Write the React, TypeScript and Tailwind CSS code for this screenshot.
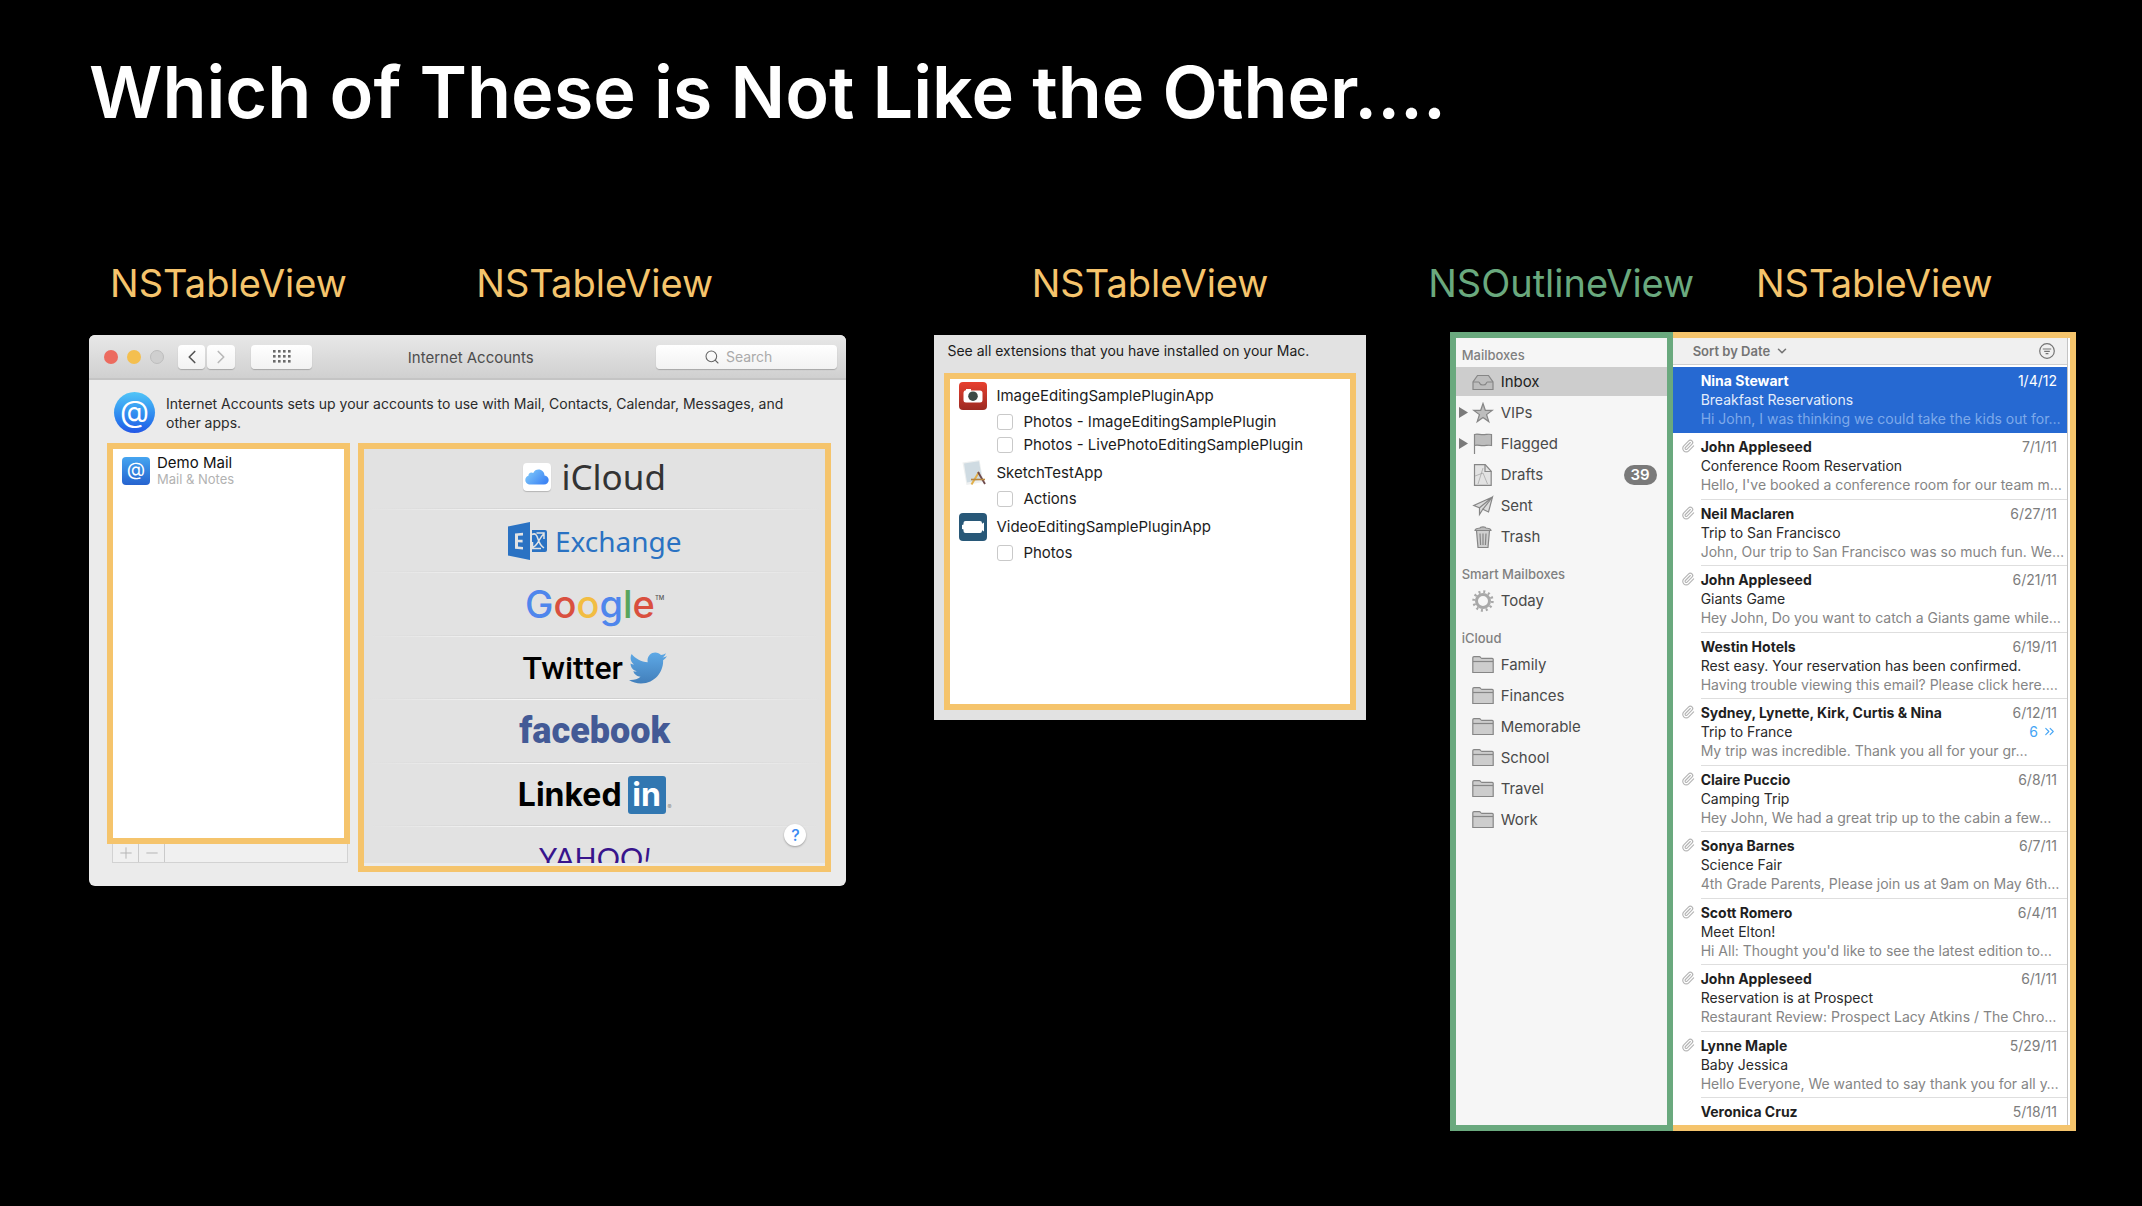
import type { ReactNode } from 'react';
import { ChevronDown, ChevronLeft, ChevronRight, ChevronsRight, Minus, Paperclip, Plus, Search } from 'lucide-react';
import { FaTwitter } from 'react-icons/fa';

/* ---------- shared pieces ---------- */

function Label({ children, green = false }: { children: ReactNode; green?: boolean }) {
  return (
    <h2
      className={`flex h-12 items-center justify-center whitespace-nowrap text-[38px] leading-[48px] ${
        green ? 'text-[#6aa97e]' : 'text-[#f5c46c]'
      }`}
    >
      <span className="shrink-0">{children}</span>
    </h2>
  );
}

/* ---------- Internet Accounts ---------- */

const toolButton =
  'flex h-6 items-center justify-center rounded-[4px] bg-gradient-to-b from-white to-[#f2f2f2] shadow-[0_1px_1px_rgba(0,0,0,0.22)]';

function GridDots() {
  return (
    <svg viewBox="0 0 18 13" className="h-[13px] w-[18px] fill-[#6a6a6a]" aria-hidden="true">
      {[0, 5, 10, 15].map((x) => [0, 5, 10].map((y) => <rect key={`${x}-${y}`} x={x} y={y} width="2.6" height="2.6" />))}
    </svg>
  );
}

function TitleBar() {
  return (
    <header className="grid h-[45px] grid-cols-[1fr_auto_1fr] items-center border-b-2 border-[#c4c4c4] bg-gradient-to-b from-[#e8e8e8] to-[#d0d0d0] pl-[15px] pr-[9px]">
      <div className="flex items-center">
        <div className="flex gap-[9px]">
          <button aria-label="Close" className="size-3.5 rounded-full bg-[#ec6b5f]" />
          <button aria-label="Minimize" className="size-3.5 rounded-full bg-[#f4bf4f]" />
          <button aria-label="Zoom" disabled className="size-3.5 rounded-full border border-[#bdbdbd] bg-[#cfcfcf]" />
        </div>
        <div className="ml-[14px] flex gap-0.5">
          <button aria-label="Back" className={`${toolButton} w-[27px] text-[#555]`}>
            <ChevronLeft size={22} strokeWidth={1.8} />
          </button>
          <button aria-label="Forward" className={`${toolButton} w-[28px] text-[#b9b9b9]`}>
            <ChevronRight size={22} strokeWidth={1.8} />
          </button>
        </div>
        <button aria-label="Show all" className={`${toolButton} ml-4 w-[61px]`}>
          <GridDots />
        </button>
      </div>
      <h3 className="pt-0.5 text-[15px] leading-5 text-[#4d4d4d]">Internet Accounts</h3>
      <label className={`${toolButton} w-[181px] gap-1.5 justify-self-end`}>
        <Search size={16} strokeWidth={1.6} className="text-[#666]" />
        <input
          type="search"
          aria-label="Search"
          placeholder="Search"
          className="w-16 appearance-none bg-transparent text-[14px] leading-5 outline-none placeholder:text-[#aaa]"
        />
      </label>
    </header>
  );
}

function CloudIcon() {
  return (
    <span className="flex size-7 items-center justify-center rounded-[4px] bg-white shadow-[0_1px_1px_rgba(0,0,0,0.2)]">
      <svg viewBox="0 0 24 16" className="h-4 w-6" aria-hidden="true">
        <defs>
          <linearGradient id="cloud" x1="0" y1="0" x2="1" y2="0.6">
            <stop offset="0" stopColor="#86d0fb" />
            <stop offset="1" stopColor="#3f86f4" />
          </linearGradient>
        </defs>
        <path
          d="M5.5 15.5C2.4 15.5.3 13.600.3 11c0-2.200 1.300-3.700 3.100-4.200C3.300 4.800 4.700 3.400 6.400 3.400c.7 0 1.300.2 1.800.5C9.300 1.700 11.200.5 13.500.5c3.300 0 5.900 2.500 6 5.900 2.500.4 4.200 2.200 4.200 4.600 0 2.600-2 4.500-4.700 4.500z"
          fill="url(#cloud)"
        />
      </svg>
    </span>
  );
}

function ExchangeIcon() {
  return (
    <svg viewBox="0 0 39 38" className="h-[38px] w-[39px]" aria-hidden="true">
      <path d="M0 4.500 22 0v38L0 33.500z" fill="#2a72c3" />
      <path d="M7 11.500 15 10.800v2.700l-5 .3v4l4.600-.1v2.700L10 20.300v4.200l5 .4v2.700l-8-.8z" fill="#e3e3e3" />
      <path d="M24 8h13a2 2 0 0 1 2 2v18a2 2 0 0 1-2 2H24z" fill="#2a72c3" />
      <path
        d="M24 12.500c3.500-2 5 1 6 4.500s2.500 6.500 6 9M24 25.500c4-1 5-3.500 7-7s3-5 5-7M28.500 11H36v6M24.500 20v6.500H33"
        fill="none"
        stroke="#e3e3e3"
        strokeWidth="1.500"
      />
    </svg>
  );
}

function Bird() {
  return (
    <>
      <FaTwitter size={38} className="fill-[url(#bird)]" />
      <svg className="absolute size-0" aria-hidden="true">
        <linearGradient id="bird" x1="0" y1="0" x2="0" y2="1">
          <stop offset="0" stopColor="#5ea9e6" />
          <stop offset="1" stopColor="#427fbb" />
        </linearGradient>
      </svg>
    </>
  );
}

const providers: { name: string; logo: ReactNode }[] = [
  {
    name: 'iCloud',
    logo: (
      <span className="flex items-center gap-2.5 pb-1">
        <CloudIcon />
        <span className="font-['Noto_Sans',sans-serif] text-[35px] leading-10 text-[#333]">iCloud</span>
      </span>
    ),
  },
  {
    name: 'Exchange',
    logo: (
      <span className="flex items-center gap-2">
        <ExchangeIcon />
        <span className="font-['Noto_Sans',sans-serif] text-[28px] leading-10 text-[#2a72c3]">Exchange</span>
      </span>
    ),
  },
  {
    name: 'Google',
    logo: (
      <span className="flex items-center text-[38px] font-medium leading-10">
        <span className="text-[#4f86ec]">G</span>
        <span className="text-[#d9503f]">o</span>
        <span className="text-[#f2bd42]">o</span>
        <span className="text-[#4f86ec]">g</span>
        <span className="text-[#58a55c]">l</span>
        <span className="text-[#d9503f]">e</span>
        <span className="self-start pt-2.5 text-[6px] leading-2 text-[#555]">TM</span>
      </span>
    ),
  },
  {
    name: 'Twitter',
    logo: (
      <span className="flex items-center gap-1.5">
        <span className="font-['Roboto',sans-serif] text-[32px] font-medium leading-10 text-black">Twitter</span>
        <Bird />
      </span>
    ),
  },
  {
    name: 'facebook',
    logo: <span className="font-['Roboto',sans-serif] text-[36px] font-black leading-10 text-[#435a96]">facebook</span>,
  },
  {
    name: 'LinkedIn',
    logo: (
      <span className="flex items-center gap-1.5 text-[32px] font-bold leading-10">
        <span className="text-black">Linked</span>
        <span className="flex size-[38px] items-center justify-center rounded-[3px] bg-[#3177b1] text-white">in</span>
        <span className="-ml-1 self-end pb-1 text-[6px] font-normal leading-2 text-[#888]">®</span>
      </span>
    ),
  },
  {
    name: 'Yahoo',
    logo: (
      <span className="font-['Lato',sans-serif] text-[29px] leading-8 text-[#38148c]">
        YAHOO<i>!</i>
      </span>
    ),
  },
];

function ProviderTable() {
  return (
    <div className="relative h-[429px] overflow-hidden border-6 border-[#f5c46c] bg-[#ebebeb] pb-[3px]">
      <ul className="h-full overflow-hidden bg-[#e2e2e2] px-1">
        {providers.map((p) => (
          <li key={p.name} className="flex flex-col odd:h-16 even:h-[63px] first:h-[61px]!">
            <button aria-label={p.name} className="flex w-full flex-1 items-center justify-center">
              {p.logo}
            </button>
            <div className="h-px bg-gradient-to-r from-transparent via-[#cecece] to-transparent" />
            <div className="h-px bg-gradient-to-r from-transparent via-white to-transparent" />
          </li>
        ))}
      </ul>
      <button
        aria-label="Help"
        className="absolute bottom-5 right-[19px] flex size-[22px] items-center justify-center rounded-full bg-white text-[16px] font-medium leading-5 text-[#3b8af2] shadow-[0_1px_2px_rgba(0,0,0,0.3)]"
      >
        ?
      </button>
    </div>
  );
}

function InternetAccounts() {
  return (
    <section className="overflow-hidden rounded-[6px] bg-[#ebebeb]">
      <TitleBar />
      <div className="flex gap-[11px] pb-2.5 pl-[25px] pr-8 pt-3">
        <span className="flex size-[41px] shrink-0 items-center justify-center rounded-full bg-gradient-to-b from-[#52c5f7] to-[#2457e6] pb-1 text-[30px] leading-8 text-white">
          @
        </span>
        <p className="pt-0.5 text-[14px] leading-[19px] text-[#2a2a2a]">
          Internet Accounts sets up your accounts to use with Mail, Contacts, Calendar, Messages, and other apps.
        </p>
      </div>
      <div className="grid grid-cols-[243px_minmax(0,1fr)] gap-2 pb-[14px] pl-[18px] pr-[15px]">
        <div>
          <ul className="h-[401px] border-6 border-[#f5c46c] bg-white px-[9px] py-1.5">
            <li className="flex items-center gap-[7px]">
              <span className="flex size-7 items-center justify-center rounded-[4px] bg-gradient-to-b from-[#46a5f0] to-[#2763cf] pb-0.5 text-[19px] leading-6 text-white">
                @
              </span>
              <span className="flex flex-col">
                <span className="text-[15px] leading-4 text-[#111]">Demo Mail</span>
                <span className="text-[13px] leading-4 text-[#b2b2b2]">Mail &amp; Notes</span>
              </span>
            </li>
          </ul>
          <div className="ml-[5px] mr-0.5 flex h-[19px] border border-t-0 border-[#d2d2d2] bg-[#f0f0f0] text-[#b4b4b4]">
            <button aria-label="Add account" className="flex w-[26px] items-center justify-center border-r border-[#cacaca]">
              <Plus size={18} strokeWidth={1.3} />
            </button>
            <button aria-label="Remove account" className="flex w-[26px] items-center justify-center border-r border-[#cacaca]">
              <Minus size={18} strokeWidth={1.3} />
            </button>
          </div>
        </div>
        <ProviderTable />
      </div>
    </section>
  );
}

/* ---------- Extensions ---------- */

function CameraApp() {
  return (
    <svg viewBox="0 0 28 28" className="size-7" aria-hidden="true">
      <defs>
        <linearGradient id="camera" x1="0" y1="0" x2="0" y2="1">
          <stop offset="0" stopColor="#e8402f" />
          <stop offset="1" stopColor="#9c2a22" />
        </linearGradient>
      </defs>
      <rect width="28" height="28" rx="4" fill="url(#camera)" />
      <path d="M7 7h5v1.500h9a2.500 2.500 0 0 1 2.500 2.500v7a2.500 2.500 0 0 1-2.500 2.500H7A2.500 2.500 0 0 1 4.500 18v-7C4.500 9.500 5.500 8.500 7 8.300z" fill="#fff" />
      <circle cx="14" cy="14.200" r="4.800" fill="#3d4a46" />
    </svg>
  );
}

function SketchApp() {
  return (
    <svg viewBox="0 0 28 28" className="size-7" aria-hidden="true">
      <path d="m3.500 3.500 17-2.500 4 22-17 3z" fill="#eef0f0" />
      <path d="m5 4.500 15-2.200 3 18.200-15 3z" fill="#cfdbe2" />
      <path d="M12.500 25.500 20 13" stroke="#e2b04a" strokeWidth="2" fill="none" />
      <path d="M19 13l7 12" stroke="#6e4a4c" strokeWidth="1.800" fill="none" />
      <path d="M12 20.500h14" stroke="#b8863f" strokeWidth="1.600" fill="none" />
    </svg>
  );
}

function VideoApp() {
  return (
    <svg viewBox="0 0 28 28" className="size-7" aria-hidden="true">
      <rect width="28" height="28" rx="4" fill="#285878" />
      <path
        d="M6.500 8h14.500a2 2 0 0 1 2 2v.8l2-1.300v9l-2-1.300v.8a2 2 0 0 1-2 2H6.500a2 2 0 0 1-2-2v-1.600L3 16v-4l1.500-.4V10a2 2 0 0 1 2-2z"
        fill="#fff"
      />
    </svg>
  );
}

const extensions = [
  {
    app: 'ImageEditingSamplePluginApp',
    icon: <CameraApp />,
    items: ['Photos - ImageEditingSamplePlugin', 'Photos - LivePhotoEditingSamplePlugin'],
  },
  { app: 'SketchTestApp', icon: <SketchApp />, items: ['Actions'] },
  { app: 'VideoEditingSamplePluginApp', icon: <VideoApp />, items: ['Photos'] },
];

function Extensions() {
  return (
    <section className="bg-[#e2e2e2] px-2.5 pb-2.5 text-[15px] text-[#1c1c1c]">
      <p className="h-[38px] whitespace-nowrap pl-[3px] pt-1.5 text-[14px] leading-5">
        See all extensions that you have installed on your Mac.
      </p>
      <ul className="h-[337px] border-6 border-[#f5c46c] bg-white pl-[9px]">
        {extensions.map((e) => (
          <li key={e.app}>
            <div className="mt-[3px] flex h-7 items-center gap-[9px] leading-5">
              {e.icon}
              {e.app}
            </div>
            {e.items.map((item) => (
              <label key={item} className="ml-[38px] flex h-[23px] items-center gap-2.5 leading-5">
                <input
                  type="checkbox"
                  className="size-4 shrink-0 appearance-none rounded-[3px] border border-[#c9c9c9] bg-white"
                />
                {item}
              </label>
            ))}
          </li>
        ))}
      </ul>
    </section>
  );
}

/* ---------- Mail ---------- */

const icons: Record<string, ReactNode> = {
  inbox: (
    <>
      <path d="M5.500 4.500h11L21 11v7.500H1V11z" fill="#bdbdbd" />
      <path d="M1 11h5.500c.8 0 1 .5 1.200 1.200.4 1.200 1.400 1.800 3.300 1.800s2.900-.6 3.300-1.800c.2-.7.4-1.200 1.200-1.200H21" fill="none" />
    </>
  ),
  star: <path d="m11 1.500 2.300 6.800h7l-5.700 4.300 2.200 7L11 15.400l-5.800 4.200 2.200-7L1.700 8.300h7z" fill="#bdbdbd" />,
  flag: <path d="M2.500 21V1.500c3-1 5 .2 8.500.2 3.500 0 5-.9 8.500-.2v11c-3.500-.7-5 .2-8.500.2-3.500 0-5.500-1.200-8.500-.2" fill="#bdbdbd" />,
  draft: (
    <>
      <path d="M2.500.7h10.700l6 6.600v14H2.500z" fill="#e3e3e3" />
      <path d="M13 .7v6.800h6.500" fill="none" />
      <path d="M6 20l5-16M15.500 20 11 9M3 12l8-3" fill="none" strokeWidth=".5" />
    </>
  ),
  sent: (
    <>
      <path d="M20.500 2 1.800 10.500l5.700 2.200zM20.500 2 7.500 12.700v6.800l3.300-5.200 5.700 2.700z" fill="#dcdcdc" />
      <path d="M20.500 2 10.800 14.300" fill="none" />
    </>
  ),
  trash: (
    <>
      <path d="M4.500 4.500h13l-1.500 17H6z" fill="#cfcfcf" />
      <path d="M3 4.500C3 2.500 5 2.300 8 2c.3-1.500 5.700-1.500 6 0 3 .3 5 .5 5 2.500zM8 7.500l.6 11.500M11 7.500V19M14 7.500 13.400 19" fill="#bdbdbd" />
    </>
  ),
  gear: (
    <>
      <circle cx="11" cy="11" r="6.500" fill="none" stroke="#a8a8a8" strokeWidth="3" />
      <circle cx="11" cy="11" r="9.300" fill="none" stroke="#a8a8a8" strokeWidth="2.800" strokeDasharray="2 2.870" />
    </>
  ),
  folder: (
    <>
      <path d="M.8 18.500V3.800c0-.7.5-1.100 1.200-1.100h5.500c1 0 1.200 1.600 2.200 1.600h10.500c.6 0 1 .4 1 1v13.200z" fill="#cdcdcd" />
      <path d="M1 7.500h20" fill="none" />
    </>
  ),
};

function Glyph({ name }: { name: string }) {
  return (
    <svg viewBox="0 0 22 22" className="size-[22px] shrink-0 stroke-[#868686]" strokeWidth="1.200" aria-hidden="true">
      {icons[name]}
    </svg>
  );
}

type Box = { name: string; icon: string; selected?: boolean; expandable?: boolean; count?: number };

const mailboxes: { title: string; boxes: Box[] }[] = [
  {
    title: 'Mailboxes',
    boxes: [
      { name: 'Inbox', icon: 'inbox', selected: true },
      { name: 'VIPs', icon: 'star', expandable: true },
      { name: 'Flagged', icon: 'flag', expandable: true },
      { name: 'Drafts', icon: 'draft', count: 39 },
      { name: 'Sent', icon: 'sent' },
      { name: 'Trash', icon: 'trash' },
    ],
  },
  { title: 'Smart Mailboxes', boxes: [{ name: 'Today', icon: 'gear' }] },
  {
    title: 'iCloud',
    boxes: ['Family', 'Finances', 'Memorable', 'School', 'Travel', 'Work'].map((name) => ({ name, icon: 'folder' })),
  },
];

function Sidebar() {
  return (
    <nav className="border-6 border-[#6aa97e] bg-[#f6f6f6]">
      {mailboxes.map((group) => (
        <div key={group.title} className="group">
          <h3 className="px-1.5 pt-2.5 text-[13px] font-medium leading-[23px] text-[#808080] group-first:pt-1.5">
            {group.title}
          </h3>
          <ul>
            {group.boxes.map((b) => (
              <li key={b.name} className="h-[31px]">
                <button
                  className={`flex h-[29px] w-full items-center pr-2.5 text-[15px] leading-5 ${
                    b.selected ? 'bg-[#cdcdcd] text-[#222]' : 'text-[#4a4a4a]'
                  }`}
                >
                  <span className="flex w-4 pl-[3px]">
                    {b.expandable && (
                      <svg viewBox="0 0 9 11" className="h-[11px] w-[9px] fill-[#7a7a7a]" aria-hidden="true">
                        <path d="M0 0l9 5.500L0 11z" />
                      </svg>
                    )}
                  </span>
                  <Glyph name={b.icon} />
                  <span className="pl-[7px]">{b.name}</span>
                  {b.count && (
                    <span className="ml-auto flex h-5 w-[33px] items-center justify-center rounded-full bg-[#7a7a7a] text-[15px] font-semibold leading-5 text-white">
                      {b.count}
                    </span>
                  )}
                </button>
              </li>
            ))}
          </ul>
        </div>
      ))}
    </nav>
  );
}

type Mail = { from: string; date: string; subject: string; text: string; clip?: boolean; thread?: number };

const mails: Mail[] = [
  { from: 'Nina Stewart', date: '1/4/12', subject: 'Breakfast Reservations', text: 'Hi John, I was thinking we could take the kids out for…' },
  { from: 'John Appleseed', date: '7/1/11', subject: 'Conference Room Reservation', text: "Hello, I've booked a conference room for our team m…", clip: true },
  { from: 'Neil Maclaren', date: '6/27/11', subject: 'Trip to San Francisco', text: 'John, Our trip to San Francisco was so much fun. We…', clip: true },
  { from: 'John Appleseed', date: '6/21/11', subject: 'Giants Game', text: 'Hey John, Do you want to catch a Giants game while…', clip: true },
  { from: 'Westin Hotels', date: '6/19/11', subject: 'Rest easy. Your reservation has been confirmed.', text: 'Having trouble viewing this email? Please click here.…' },
  { from: 'Sydney, Lynette, Kirk, Curtis & Nina', date: '6/12/11', subject: 'Trip to France', text: 'My trip was incredible. Thank you all for your gr…', clip: true, thread: 6 },
  { from: 'Claire Puccio', date: '6/8/11', subject: 'Camping Trip', text: 'Hey John, We had a great trip up to the cabin a few…', clip: true },
  { from: 'Sonya Barnes', date: '6/7/11', subject: 'Science Fair', text: '4th Grade Parents, Please join us at 9am on May 6th…', clip: true },
  { from: 'Scott Romero', date: '6/4/11', subject: 'Meet Elton!', text: "Hi All: Thought you'd like to see the latest edition to…", clip: true },
  { from: 'John Appleseed', date: '6/1/11', subject: 'Reservation is at Prospect', text: 'Restaurant Review: Prospect Lacy Atkins / The Chro…', clip: true },
  { from: 'Lynne Maple', date: '5/29/11', subject: 'Baby Jessica', text: 'Hello Everyone, We wanted to say thank you for all y…', clip: true },
  { from: 'Veronica Cruz', date: '5/18/11', subject: '', text: '' },
];

function MailRow({ mail, selected }: { mail: Mail; selected: boolean }) {
  return (
    <li
      className={`flex whitespace-nowrap text-[14px] leading-[19px] odd:h-[66px] even:h-[67px] last:h-auto ${
        selected ? 'bg-[#2669d2]' : ''
      }`}
    >
      <div className="w-7 shrink-0 pl-2 pt-1.5">
        {mail.clip && <Paperclip size={14} strokeWidth={2} className="text-[#b5b5b5]" />}
      </div>
      <div className={`min-w-0 flex-1 pr-2.5 pt-1 ${selected ? '' : 'border-b border-[#dedede]'}`}>
        <div className="flex justify-between">
          <span className={`font-bold ${selected ? 'text-white' : 'text-[#1f1f1f]'}`}>{mail.from}</span>
          <span className={selected ? 'text-white' : 'text-[#7d7d7d]'}>{mail.date}</span>
        </div>
        <div className="flex justify-between">
          <span className={selected ? 'text-[#e3ecfa]' : 'text-[#2a2a2a]'}>{mail.subject}</span>
          {mail.thread && (
            <span className="flex items-center gap-1 text-[#45a5f5]">
              {mail.thread}
              <ChevronsRight size={15} strokeWidth={1.8} />
            </span>
          )}
        </div>
        <p className={selected ? 'text-[#7ea9ea]' : 'text-[#858585]'}>{mail.text}</p>
      </div>
    </li>
  );
}

function MessageList() {
  return (
    <div className="border-y-6 border-r-6 border-[#f5c46c] bg-white pr-0.5">
      <div className="h-full overflow-hidden border-r border-[#c4c4c4]">
        <header className="mb-0.5 flex h-[27px] items-center justify-between border-b border-[#cfcfcf] bg-[#f0f0f0] pl-5 pr-3">
          <label className="flex items-center">
            <select
              aria-label="Sort messages"
              className="appearance-none bg-transparent text-[13px] font-semibold leading-5 text-[#747474] outline-none"
            >
              <option>Sort by Date</option>
            </select>
            <ChevronDown size={14} strokeWidth={2.6} className="ml-1 text-[#747474]" />
          </label>
          <button aria-label="Filter">
            <svg viewBox="0 0 16 16" className="size-4" fill="none" stroke="#747474" strokeWidth="1.200" aria-hidden="true">
              <circle cx="8" cy="8" r="7.300" />
              <path d="M3.800 6h8.400M5.200 8.300h5.600M6.600 10.600h2.800" />
            </svg>
          </button>
        </header>
        <ul>
          {mails.map((m, i) => (
            <MailRow key={m.date} mail={m} selected={i === 0} />
          ))}
        </ul>
      </div>
    </div>
  );
}

/* ---------- page ---------- */

export default function App() {
  return (
    <main className="min-h-screen bg-black pb-16 pl-[89px] pr-[66px] pt-12 font-['Inter',sans-serif]">
      <h1 className="whitespace-nowrap text-[72px] font-semibold leading-[88px] text-white">
        Which of These is Not Like the Other....
      </h1>
      <div className="mt-[123px] grid grid-cols-[minmax(0,761fr)_minmax(0,431fr)_minmax(0,626fr)] items-start gap-x-[84px]">
        <div className="pr-1">
          <div className="mb-7 grid grid-cols-[243px_minmax(0,1fr)] gap-2 pl-[18px] pr-[15px]">
            <Label>NSTableView</Label>
            <Label>NSTableView</Label>
          </div>
          <InternetAccounts />
        </div>
        <div>
          <div className="mb-7">
            <Label>NSTableView</Label>
          </div>
          <Extensions />
        </div>
        <div>
          <div className="mb-[25px] grid grid-cols-[223px_minmax(0,1fr)]">
            <Label green>NSOutlineView</Label>
            <Label>NSTableView</Label>
          </div>
          <div className="grid h-[799px] grid-cols-[223px_minmax(0,1fr)] grid-rows-[minmax(0,1fr)]">
            <Sidebar />
            <MessageList />
          </div>
        </div>
      </div>
    </main>
  );
}
